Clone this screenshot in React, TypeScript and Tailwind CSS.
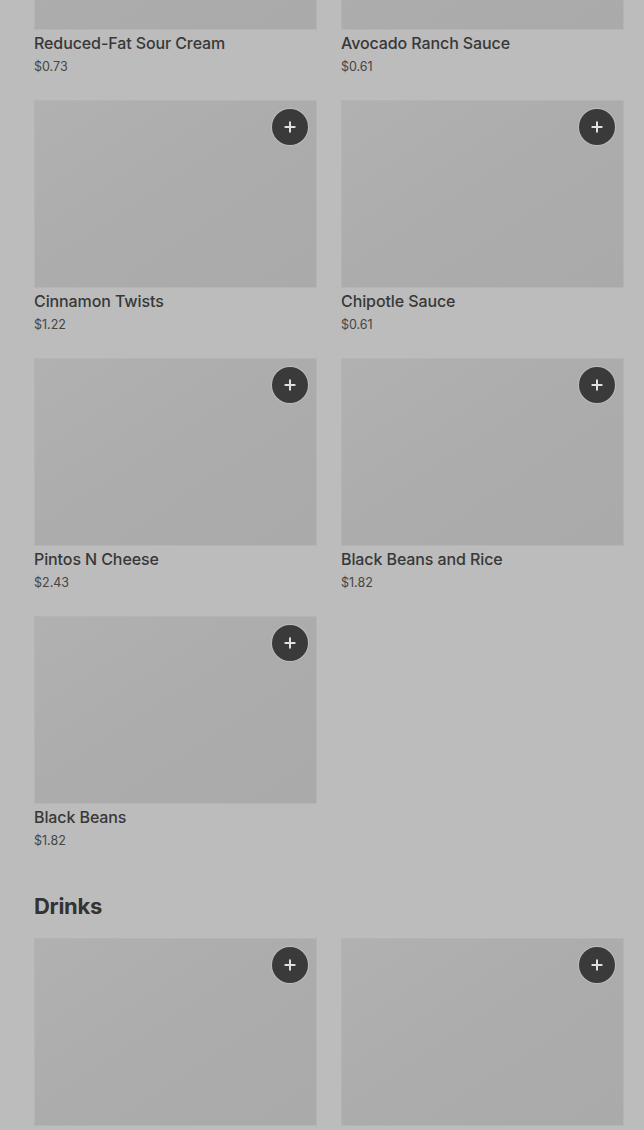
import { Plus } from "lucide-react";

type Item = { name: string; price: string };

const sides: Item[] = [
  { name: "Reduced-Fat Sour Cream", price: "$0.73" },
  { name: "Avocado Ranch Sauce", price: "$0.61" },
  { name: "Cinnamon Twists", price: "$1.22" },
  { name: "Chipotle Sauce", price: "$0.61" },
  { name: "Pintos N Cheese", price: "$2.43" },
  { name: "Black Beans and Rice", price: "$1.82" },
  { name: "Black Beans", price: "$1.82" },
];

// drinks names/prices sit below the fold, only the photos show
const drinks = [1, 2];

const Photo = () => (
  <div className="relative h-[188px] bg-gradient-to-br from-[#b1b1b1] via-[#acacac] to-[#aaaaaa] border border-[#b4b4b4]">
    <button className="absolute top-[8px] right-[8px] w-9 h-9 rounded-full bg-[#3a3a3a] flex items-center justify-center shadow-[0_0_0_1px_rgba(200,200,200,0.6)]">
      <Plus size={16} strokeWidth={3} className="text-[#e0e0e0]" />
    </button>
  </div>
);

const ItemCard = ({ item }: { item: Item }) => (
  <div className="flex flex-col">
    <Photo />
    <div className="pt-[1px]">
      <p className="text-[16px] leading-[24px] font-medium text-[#383838] tracking-[-0.1px]">{item.name}</p>
      <p className="text-[12.5px] leading-[23px] text-[#454545]">{item.price}</p>
    </div>
  </div>
);

export default function App() {
  return (
    <div className="min-h-screen bg-[#bcbcbc] overflow-hidden font-['Inter',sans-serif]">
      <div className="mt-[-158px] pl-[34px] pr-[20px]">
        <div className="grid grid-cols-2 gap-x-[24px] gap-y-[22px]">
          {sides.map((item, idx) => (
            <ItemCard key={idx} item={item} />
          ))}
        </div>

        <h2 className="mt-[38px] mb-[16px] text-[22px] leading-[32px] font-bold text-[#333333] tracking-[-0.3px]">
          Drinks
        </h2>

        <div className="grid grid-cols-2 gap-x-[24px] gap-y-[22px]">
          {drinks.map((d) => (
            <Photo key={d} />
          ))}
        </div>
      </div>
    </div>
  );
}
